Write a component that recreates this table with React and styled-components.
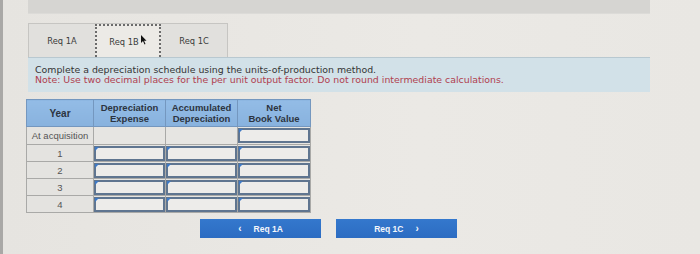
import React from "react";
import styled, { createGlobalStyle } from "styled-components";

const Global = createGlobalStyle`
  html, body { margin: 0; padding: 0; }
  body {
    background: #e8e6e2;
    font-family: "DejaVu Sans", Verdana, sans-serif;
    color: #333;
  }
`;

const Page = styled.div`
  width: 700px;
  height: 254px;
  box-sizing: border-box;
  border-left: 3px solid #a9a8a6;
  background: linear-gradient(90deg, #e6e4e0 0%, #ebe9e5 60%, #e9e7e3 100%);
  overflow: hidden;
  display: flex;
  flex-direction: column;
`;

const TopBand = styled.div`
  margin-left: 25px;
  width: 622px;
  height: 13px;
  background: #d6d5d2;
  border-bottom: 1px solid #dcdbd8;
`;

const Tabs = styled.div`
  display: flex;
  margin: 9px 0 0 25px;
  width: max-content;
  border: 1px solid #c6c5c2;
  border-bottom: none;
  background: #e1e0dd;
`;

const Tab = styled.div`
  width: 66px;
  height: 33px;
  box-sizing: border-box;
  display: flex;
  align-items: center;
  justify-content: center;
  font-size: 8.3px;
  color: #3a3a3a;
  background: ${(p) => (p.$active ? "#eceae6" : "transparent")};
  border: ${(p) => (p.$active ? "2px dotted #6b6b6b" : "none")};
  border-bottom: none;
`;

const Cursor = styled.svg`
  margin-left: 1px;
  margin-top: -4px;
`;

const Instructions = styled.div`
  margin-left: 25px;
  width: 622px;
  height: 35px;
  box-sizing: border-box;
  background: #d2e1e8;
  border-top: 1px solid #b8c8d0;
  padding: 7px 0 0 7px;
  font-size: 9.4px;
  line-height: 10px;
`;

const Line = styled.div`
  color: ${(p) => (p.$note ? "#b0404f" : "#343434")};
  white-space: nowrap;
`;

const Table = styled.table`
  margin: 7px 0 0 23px;
  width: 284px;
  table-layout: fixed;
  border-collapse: collapse;
  font-family: "Liberation Sans", Arial, sans-serif;
  font-size: 9.5px;
`;

const Th = styled.th`
  width: ${(p) => p.$w}px;
  height: 26px;
  padding: 0;
  background: linear-gradient(#93bce6, #88b2de);
  border: 1px solid #7497bf;
  color: #2c3440;
  font-weight: bold;
  font-size: ${(p) => (p.$big ? 10 : 9.5)}px;
  line-height: 11px;
  text-align: center;
`;

const YearCell = styled.td`
  height: ${(p) => p.$h}px;
  padding: 0;
  background: #e4e3e0;
  border: 1px solid #a9a9a7;
  color: #555;
  text-align: center;
  white-space: nowrap;
`;

const BlankCell = styled.td`
  padding: 0;
  background: #e6e5e2;
  border: 1px solid #a9a9a7;
`;

const InputCell = styled.td`
  padding: 0;
  border: 1px solid #a9a9a7;
  background: #e6e5e2;
`;

const Field = styled.div`
  position: relative;
  height: 15px;
  box-sizing: border-box;
  border: 2px solid #5f7590;
  background: #edecea;
  &::before {
    content: "";
    position: absolute;
    left: -1px;
    top: -1px;
    border-left: 4px solid #3f79c4;
    border-bottom: 4px solid transparent;
  }
`;

const Buttons = styled.div`
  display: flex;
  gap: 15px;
  margin: 6px 0 0 197px;
`;

const NavButton = styled.div`
  width: 121px;
  height: 19px;
  display: flex;
  align-items: center;
  justify-content: center;
  gap: 12px;
  background: linear-gradient(#3478cd, #2c6cc2);
  color: #f4f7fb;
  font-family: "Liberation Sans", Arial, sans-serif;
  font-weight: bold;
  font-size: 8.5px;
`;

const Chevron = styled.span`
  font-size: 10px;
  font-weight: bold;
`;

const rows = ["1", "2", "3", "4"];

export default function App() {
  return (
    <>
      <Global />
      <Page>
        <TopBand />
        <Tabs>
          <Tab>Req 1A</Tab>
          <Tab $active>
            Req 1B
            <Cursor width="7" height="10" viewBox="0 0 7 10">
              <path d="M1 0 L1 8 L3 6 L4.5 9.5 L5.5 9 L4 5.8 L6.5 5.8 Z" fill="#111" />
            </Cursor>
          </Tab>
          <Tab>Req 1C</Tab>
        </Tabs>
        <Instructions>
          <Line>Complete a depreciation schedule using the units-of-production method.</Line>
          <Line $note>
            Note: Use two decimal places for the per unit output factor. Do not round intermediate calculations.
          </Line>
        </Instructions>
        <Table>
          <colgroup>
            <col style={{ width: 67 }} />
            <col style={{ width: 72 }} />
            <col style={{ width: 72 }} />
            <col style={{ width: 73 }} />
          </colgroup>
          <thead>
            <tr>
              <Th $big>Year</Th>
              <Th>
                Depreciation
                <br />
                Expense
              </Th>
              <Th>
                Accumulated
                <br />
                Depreciation
              </Th>
              <Th>
                Net
                <br />
                Book Value
              </Th>
            </tr>
          </thead>
          <tbody>
            <tr>
              <YearCell $h={17}>At acquisition</YearCell>
              <BlankCell />
              <BlankCell />
              <InputCell>
                <Field />
              </InputCell>
            </tr>
            {rows.map((r) => (
              <tr key={r}>
                <YearCell $h={16}>{r}</YearCell>
                <InputCell>
                  <Field />
                </InputCell>
                <InputCell>
                  <Field />
                </InputCell>
                <InputCell>
                  <Field />
                </InputCell>
              </tr>
            ))}
          </tbody>
        </Table>
        <Buttons>
          <NavButton>
            <Chevron>‹</Chevron>
            <span>Req 1A</span>
          </NavButton>
          <NavButton>
            <span>Req 1C</span>
            <Chevron>›</Chevron>
          </NavButton>
        </Buttons>
      </Page>
    </>
  );
}
